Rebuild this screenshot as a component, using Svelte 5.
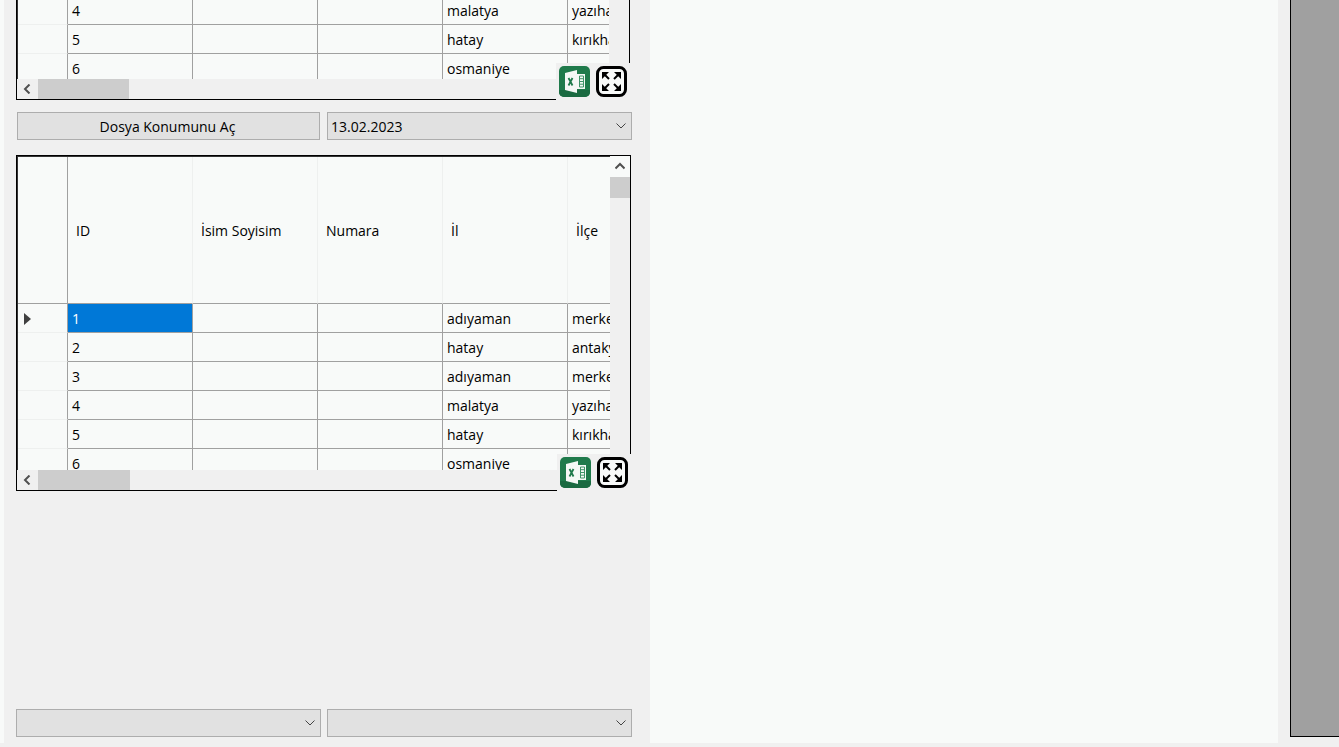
<script>
	const columns = ["ID", "İsim Soyisim", "Numara", "İl", "İlçe", "Adres"];
	const rows = [
		{ id: 1, il: "adıyaman", ilce: "merkez" },
		{ id: 2, il: "hatay", ilce: "antakya" },
		{ id: 3, il: "adıyaman", ilce: "merkez" },
		{ id: 4, il: "malatya", ilce: "yazıhan" },
		{ id: 5, il: "hatay", ilce: "kırıkhan" },
		{ id: 6, il: "osmaniye", ilce: "" },
	];
	const grids = ["first", "second"];
</script>

{#snippet chevron()}
	<svg class="chevron" width="10" height="6" viewBox="0 0 10 6">
		<path d="M.5.5L5 5 9.500.5" fill="none" stroke="#444" stroke-width="1" />
	</svg>
{/snippet}

{#snippet arrow(d)}
	<svg width="10" height="10" viewBox="0 0 10 10">
		<path {d} fill="none" stroke="#505050" stroke-width="2" />
	</svg>
{/snippet}

<div class="window">
	<div class="edge"></div>
	<div class="left">
		{#each grids as name, g}
			<div class="grid-wrap {name}">
				<div class="grid">
					<div class="view">
						<div class="table">
							<div class="corner"></div>
							{#each columns as col}
								<div class="head">{col}</div>
							{/each}
							{#each rows as row, r}
								<div class="rowhead">
									{#if r === 0}<span class="marker"></span>{/if}
								</div>
								<div class="cell" class:selected={r === 0}>{row.id}</div>
								<div class="cell"></div>
								<div class="cell"></div>
								<div class="cell">{row.il}</div>
								<div class="cell">{row.ilce}</div>
								<div class="cell"></div>
							{/each}
						</div>
					</div>
					<div class="vbar">
						<div class="vbtn">{@render arrow("M.5 6.500L5 2l4.500 4.500")}</div>
						<div class="vthumb"></div>
					</div>
					<div class="hbar">
						<div class="hbtn">{@render arrow("M6.500.5L2 5l4.500 4.500")}</div>
						<div class="hthumb"></div>
					</div>
				</div>
				<div class="tools">
					<svg width="31" height="31" viewBox="0 0 31 31">
						<rect width="31" height="31" rx="5" fill="#1f7a4b" />
						<path d="M0 24h31v2a5 5 0 0 1-5 5H5a5 5 0 0 1-5-5z" fill="#1a6a41" />
						<path d="M6 7l12-3v23L6 24z" fill="#f4f8f5" />
						<path d="M9.500 12l4 7.500M13.500 12l-4 7.500" stroke="#1f7a4b" stroke-width="1.800" fill="none" />
						<path d="M18 8h8v15h-8z" fill="#f4f8f5" />
						<path d="M20.500 10h4v11h-4zM20.500 12.700h4M20.500 15.500h4M20.500 18.200h4" fill="none" stroke="#3f9468" stroke-width="1" />
					</svg>
					<svg width="31" height="31" viewBox="0 0 31 31">
						<rect x="1.500" y="1.500" width="28" height="28" rx="6" fill="#f8faf9" stroke="#000" stroke-width="3" />
						<path d="M6 6h7l-7 7zM25 6v7l-7-7zM6 25v-7l7 7zM25 25h-7l7-7z" fill="#000" />
						<path d="M8 8l5 5M23 8l-5 5M8 23l5-5M23 23l-5-5" stroke="#000" stroke-width="2" fill="none" />
					</svg>
				</div>
			</div>
			{#if g === 0}
				<div class="controls open-row">
					<button class="open">Dosya Konumunu Aç</button>
					<div class="combo">13.02.2023{@render chevron()}</div>
				</div>
			{/if}
		{/each}
		<div class="controls bottom-row">
			<div class="combo">{@render chevron()}</div>
			<div class="combo">{@render chevron()}</div>
		</div>
	</div>
	<div class="right"></div>
	<div class="dark"></div>
</div>

<style>
	:global(body) {
		margin: 0;
		background: #f0f0f0;
		overflow: hidden;
	}

	.window {
		display: flex;
		height: 747px;
		overflow: hidden;
		background: #f0f0f0;
		font-family: "Open Sans", "Noto Sans", sans-serif;
		font-size: 14px;
		color: #000;
	}

	.edge {
		width: 4px;
		height: 743px;
		flex-shrink: 0;
		background: #f8faf9;
	}

	.left {
		width: 646px;
		flex-shrink: 0;
		box-sizing: border-box;
		height: 987px;
		margin-top: -240px;
		padding: 0 0 10px 12px;
		display: flex;
		flex-direction: column;
	}

	.right {
		width: 628px;
		height: 743px;
		flex-shrink: 0;
		background: #f8faf9;
	}

	.dark {
		flex: 1;
		height: 737px;
		margin-left: 12px;
		margin-right: -2px;
		box-sizing: border-box;
		border: 1px solid #000;
		border-top: none;
		background: #a0a0a0;
	}

	.grid-wrap {
		position: relative;
		flex-shrink: 0;
	}

	.first {
		width: 614px;
		height: 340px;
	}

	.second {
		width: 615px;
		height: 336px;
	}

	.grid {
		box-sizing: border-box;
		width: 100%;
		height: 100%;
		border: 1px solid #000;
		display: grid;
		grid-template-columns: 1fr 20px;
		grid-template-rows: 1fr 20px;
		background: #f0f0f0;
	}

	.view {
		box-sizing: border-box;
		overflow: hidden;
		min-width: 0;
		min-height: 0;
		background: #f8faf9;
		border-left: 1px solid #333;
		border-top: 1px solid #333;
	}

	.table {
		display: grid;
		grid-template-columns: 50px repeat(6, 125px);
		grid-template-rows: 147px repeat(6, 29px);
		width: 800px;
	}

	.corner,
	.head {
		box-sizing: border-box;
		display: flex;
		align-items: center;
		border-right: 1px solid #eef0ef;
		border-bottom: 1px solid #a0a0a0;
	}

	.corner {
		border-right-color: #a0a0a0;
	}

	.head {
		padding: 0 0 0 8px;
	}

	.rowhead {
		box-sizing: border-box;
		border-right: 1px solid #a0a0a0;
		border-bottom: 1px solid #eef0ef;
		display: flex;
		align-items: center;
		padding: 2px 0 0 6px;
	}

	.marker {
		width: 0;
		height: 0;
		border-left: 7px solid #404040;
		border-top: 6px solid transparent;
		border-bottom: 6px solid transparent;
	}

	.cell {
		box-sizing: border-box;
		display: flex;
		align-items: center;
		padding-left: 4px;
		border-right: 1px solid #a0a0a0;
		border-bottom: 1px solid #a0a0a0;
		white-space: nowrap;
		overflow: hidden;
	}

	.selected {
		background: #0078d7;
		color: #fff;
	}

	.vbar {
		background: #f0f0f0;
	}

	.vbtn {
		height: 21px;
		display: flex;
		align-items: center;
		justify-content: center;
		background: #f8faf9;
	}

	.vthumb {
		height: 21px;
		background: #cdcdcd;
	}

	.hbar {
		grid-column: 1 / 3;
		display: flex;
		background: #f0f0f0;
	}

	.hbtn {
		width: 21px;
		display: flex;
		align-items: center;
		justify-content: center;
	}

	.hthumb {
		width: 91px;
		background: #cdcdcd;
	}

	.second .hthumb {
		width: 92px;
	}

	.tools {
		position: absolute;
		right: -2px;
		bottom: 0;
		width: 76px;
		height: 37px;
		box-sizing: border-box;
		padding: 3px 5px 0 3px;
		display: flex;
		justify-content: space-between;
		align-items: flex-start;
		background: #f0f0f0;
	}

	.controls {
		display: flex;
		flex-shrink: 0;
	}

	.open-row {
		margin: 12px 0 15px;
		gap: 7px;
		height: 28px;
		padding-left: 1px;
	}

	.bottom-row {
		margin-top: auto;
		gap: 6px;
		height: 28px;
	}

	.open {
		width: 303px;
		padding: 0 2px 0 0;
		border: 1px solid #adadad;
		background: #e1e1e1;
		font: inherit;
		color: #000;
	}

	.combo {
		width: 305px;
		box-sizing: border-box;
		display: flex;
		align-items: center;
		justify-content: space-between;
		padding: 0 5px 0 3px;
		border: 1px solid #adadad;
		background: #e1e1e1;
	}

	.chevron {
		margin-left: auto;
	}
</style>
